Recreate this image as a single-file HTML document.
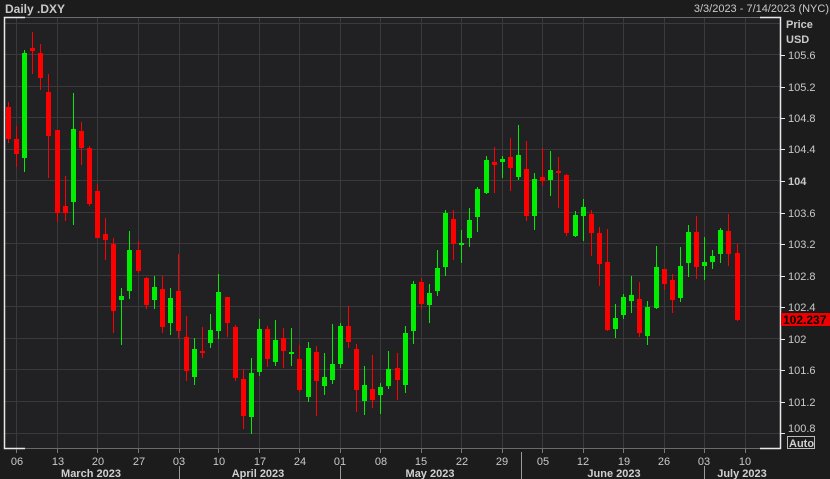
<!DOCTYPE html>
<html><head><meta charset="utf-8"><style>
html,body{margin:0;padding:0;background:#1c1c1d;width:830px;height:479px;overflow:hidden}
svg{display:block;font-family:"Liberation Sans",Tahoma,sans-serif}
</style></head><body>
<svg width="830" height="479" viewBox="0 0 830 479" xmlns="http://www.w3.org/2000/svg">
<rect x="0" y="0" width="830" height="479" fill="#1c1c1d"/>
<rect x="4" y="17" width="776" height="432" fill="#212123"/>
<g stroke="#3a3a3a" stroke-width="1">
<path d="M4 23.5H780M4 54.5H780M4 86.5H780M4 117.5H780M4 149.5H780M4 180.5H780M4 212.5H780M4 243.5H780M4 275.5H780M4 306.5H780M4 338.5H780M4 369.5H780M4 401.5H780M4 433.5H780"/>
<path d="M16.5 17V449M57.5 17V449M97.5 17V449M138.5 17V449M179.5 17V449M218.5 17V449M259.5 17V449M299.5 17V449M340.5 17V449M380.5 17V449M421.5 17V449M461.5 17V449M502.5 17V449M542.5 17V449M583.5 17V449M623.5 17V449M664.5 17V449M704.5 17V449M745.5 17V449"/>
</g>
<g stroke="#6a6a6a"><path d="M25 17.5H760M25 448.5H760"/></g>
<g stroke="#e8e8e8" stroke-width="1.5" fill="none">
<path d="M25 17.5H4.5V448.5H25"/><path d="M760 17.5H780.5V448.5H760"/>
</g>
<g stroke="#e8e8e8"><path d="M780 55.5h5M780 87.5h5M780 118.5h5M780 149.5h5M780 181.5h5M780 213.5h5M780 244.5h5M780 276.5h5M780 307.5h5M780 339.5h5M780 370.5h5M780 402.5h5M780 433.5h5"/></g>
<g stroke="#7a7a7a"><path d="M16.5 449v4M57.5 449v4M97.5 449v4M138.5 449v4M179.5 449v4M218.5 449v4M259.5 449v4M299.5 449v4M340.5 449v4M380.5 449v4M421.5 449v4M461.5 449v4M502.5 449v4M542.5 449v4M583.5 449v4M623.5 449v4M664.5 449v4M704.5 449v4M745.5 449v4"/></g>
<g stroke="#9a9a9a"><path d="M179.5 466V479M340.5 466V479M521.5 452V479M704.5 466V479"/></g>
<g id="c"></g>
<g fill="#c9c9c9" font-size="11">
<text x="5" y="13" font-weight="bold" font-size="12">Daily .DXY</text>
<text x="829" y="12" text-anchor="end">3/3/2023 - 7/14/2023 (NYC)</text>
<text x="786" y="28" font-weight="bold">Price</text>
<text x="786" y="43" font-weight="bold">USD</text>
<text x="788" y="59">105.6</text><text x="788" y="91">105.2</text><text x="788" y="122">104.8</text><text x="788" y="153">104.4</text>
<text x="788" y="185" font-weight="bold">104</text><text x="788" y="217">103.6</text><text x="788" y="248">103.2</text><text x="788" y="280">102.8</text>
<text x="788" y="311">102.4</text><text x="788" y="343">102</text><text x="788" y="374">101.6</text><text x="788" y="406">101.2</text><text x="788" y="432">100.8</text>
</g>
<rect x="781" y="313" width="49" height="13" fill="#ee0000"/>
<text x="783" y="324" font-size="12" font-weight="bold" fill="#000">102.237</text>
<rect x="787.5" y="436.5" width="27" height="12" fill="none" stroke="#bbb"/>
<text x="789" y="447" font-size="11" font-weight="bold" fill="#d0d0d0">Auto</text>
<g fill="#c9c9c9" font-size="11" text-anchor="middle">
<text x="17" y="465">06</text><text x="58" y="465">13</text><text x="98" y="465">20</text><text x="139" y="465">27</text><text x="179" y="465">03</text><text x="219" y="465">10</text><text x="260" y="465">17</text><text x="300" y="465">24</text><text x="340" y="465">01</text><text x="381" y="465">08</text><text x="421" y="465">15</text><text x="462" y="465">22</text><text x="502" y="465">29</text><text x="543" y="465">05</text><text x="583" y="465">12</text><text x="624" y="465">19</text><text x="664" y="465">26</text><text x="704" y="465">03</text><text x="745" y="465">10</text>
</g>
<g fill="#d0d0d0" font-size="11" font-weight="bold" text-anchor="middle">
<text x="91" y="477">March 2023</text><text x="258" y="477">April 2023</text><text x="430" y="477">May 2023</text><text x="614" y="477">June 2023</text><text x="742" y="477">July 2023</text>
</g>
<g id="candles">
</g>
</svg>
<script>
var d=[[8,102,143,107,139,0],[16,126,167,139,154,0],[24,50,172,53,158,1],[32,32,74,48,51,0],[40,44,90,53,78,0],[48,74,178,92,136,0],[57,130,222,130,213,0],[65,176,221,206,213,0],[73,93,225,129,202,1],[81,122,165,131,148,0],[89,146,206,148,204,0],[97,184,238,191,238,0],[105,218,260,234,240,0],[113,238,333,244,311,0],[121,288,345,296,300,1],[129,231,299,250,291,1],[138,241,273,250,271,0],[146,277,309,278,305,0],[154,276,309,287,300,1],[162,276,333,289,327,0],[170,288,335,298,323,1],[178,254,339,291,331,0],[186,316,381,337,371,0],[194,338,385,349,377,1],[202,327,358,351,353,0],[210,314,348,330,343,1],[218,274,339,292,331,1],[227,297,337,297,323,0],[235,325,381,327,378,0],[243,369,429,379,416,0],[251,358,434,373,417,1],[259,319,376,329,372,1],[267,326,367,329,359,0],[275,320,366,340,362,1],[283,328,368,338,351,0],[291,328,366,352,354,1],[299,345,392,359,390,0],[308,342,402,348,397,1],[316,346,416,352,381,0],[324,353,395,377,386,1],[332,324,384,364,380,1],[340,323,368,326,364,1],[348,306,348,326,342,0],[356,344,412,349,390,0],[364,366,415,385,401,1],[372,355,408,389,400,0],[380,383,414,387,395,1],[388,351,389,369,386,1],[397,353,400,368,380,0],[405,326,393,333,385,1],[413,281,344,284,331,1],[421,278,309,282,304,0],[429,284,323,293,305,1],[437,250,296,268,291,1],[445,210,276,213,267,1],[453,210,260,219,244,0],[461,230,263,243,245,1],[469,208,247,220,238,1],[477,187,232,189,217,1],[486,156,194,160,193,1],[494,147,193,162,165,0],[502,156,178,159,162,1],[510,138,191,157,168,0],[518,125,180,155,177,1],[526,141,221,169,216,0],[534,173,230,179,216,1],[542,148,186,177,181,0],[550,151,196,170,180,1],[558,157,208,171,173,0],[566,174,236,175,233,0],[575,211,237,215,236,1],[583,199,241,207,216,1],[591,210,256,214,233,0],[599,227,286,233,264,0],[607,229,331,262,330,0],[615,304,338,318,329,1],[623,294,319,297,315,1],[631,276,313,295,301,1],[639,282,337,299,333,0],[647,301,345,307,336,1],[656,246,309,267,308,1],[664,269,290,269,284,0],[672,274,313,280,300,0],[680,247,302,266,298,1],[688,225,277,232,263,1],[696,216,279,232,267,0],[704,237,280,262,266,1],[712,250,269,256,262,1],[720,228,263,230,254,1],[728,214,266,231,254,0],[737,244,321,253,320,0]];
var s='',ns='http://www.w3.org/2000/svg';
d.forEach(function(c){var col=c[5]?'#00ee00':'#ff0000';
s+='<rect x="'+c[0]+'" y="'+c[1]+'" width="1" height="'+(c[2]-c[1])+'" fill="'+col+'"/>';
s+='<rect x="'+(c[0]-2)+'" y="'+c[3]+'" width="5" height="'+Math.max(2,c[4]-c[3])+'" fill="'+col+'"/>';});
document.getElementById('candles').innerHTML=s;
</script>
</body></html>
